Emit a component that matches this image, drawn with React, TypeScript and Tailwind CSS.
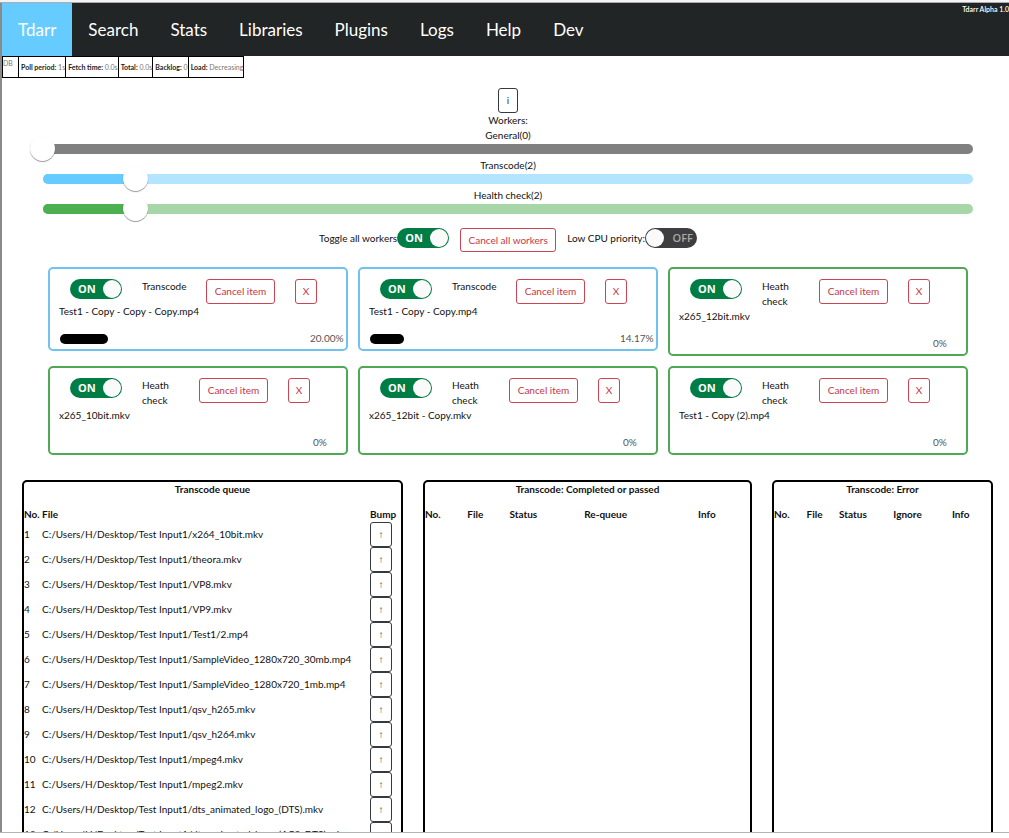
import React from "react";
import clsx from "clsx";

type WorkerKind = "transcode" | "health";

interface Worker {
  id: number;
  kind: WorkerKind;
  file: string;
  progress: number;
  percent: string;
}

const navItems = ["Tdarr", "Search", "Stats", "Libraries", "Plugins", "Logs", "Help", "Dev"];

const workers: Worker[] = [
  { id: 1, kind: "transcode", file: "Test1 - Copy - Copy - Copy.mp4", progress: 20, percent: "20.00%" },
  { id: 2, kind: "transcode", file: "Test1 - Copy - Copy.mp4", progress: 14.17, percent: "14.17%" },
  { id: 3, kind: "health", file: "x265_12bit.mkv", progress: 0, percent: "0%" },
  { id: 4, kind: "health", file: "x265_10bit.mkv", progress: 0, percent: "0%" },
  { id: 5, kind: "health", file: "x265_12bit - Copy.mkv", progress: 0, percent: "0%" },
  { id: 6, kind: "health", file: "Test1 - Copy (2).mp4", progress: 0, percent: "0%" }
];

const queue = [
  "x264_10bit.mkv",
  "theora.mkv",
  "VP8.mkv",
  "VP9.mkv",
  "Test1/2.mp4",
  "SampleVideo_1280x720_30mb.mp4",
  "SampleVideo_1280x720_1mb.mp4",
  "qsv_h265.mkv",
  "qsv_h264.mkv",
  "mpeg4.mkv",
  "mpeg2.mkv",
  "dts_animated_logo_(DTS).mkv",
  "dts_animated_logo_(AC3_DTS).mkv"
];

const Toggle: React.FC<{ label: string; defaultOn?: boolean }> = ({ label, defaultOn = false }) => (
  <span className="relative inline-block h-5 w-[52px] shrink-0">
    <input
      type="checkbox"
      role="switch"
      aria-label={label}
      defaultChecked={defaultOn}
      className="peer block h-5 w-[52px] cursor-pointer appearance-none rounded-full bg-[#3e3e40] checked:bg-[#007d44]"
    />
    <span className="pointer-events-none absolute left-px top-px size-[18px] rounded-full bg-[#fafafa] peer-checked:left-auto peer-checked:right-px" />
    <span
      className={clsx(
        "pointer-events-none absolute top-0 font-['Open_Sans',sans-serif] text-[11px] leading-5",
        defaultOn ? "left-2 font-bold text-white" : "right-1 font-semibold text-[#a8a8a8]"
      )}
    >
      {defaultOn ? "ON" : "OFF"}
    </span>
  </span>
);

const DangerButton: React.FC<{ children: React.ReactNode; className?: string }> = ({ children, className }) => (
  <button
    type="button"
    className={clsx("shrink-0 rounded-[3px] border border-[#cb4452] bg-white text-center text-[#c93545]", className)}
  >
    {children}
  </button>
);

interface WorkerSliderProps {
  id: string;
  label: string;
  value: number;
  railClass: string;
  fillClass: string;
}

const WorkerSlider: React.FC<WorkerSliderProps> = ({ id, label, value, railClass, fillClass }) => (
  <div>
    <label htmlFor={id} className="block text-center">
      {label}({value})
    </label>
    <div className="relative h-[15px] px-[13px] pt-px">
      <div className={clsx("h-[10px] overflow-hidden rounded-full", railClass)}>
        <div className={clsx("h-full", fillClass)} style={{ width: `${value * 5}%` }} />
      </div>
      <input
        id={id}
        type="range"
        min={0}
        max={20}
        defaultValue={value}
        className="absolute inset-x-0 top-0 h-[10px] w-full cursor-pointer appearance-none bg-transparent [&::-webkit-slider-thumb]:size-[25px] [&::-webkit-slider-thumb]:appearance-none [&::-webkit-slider-thumb]:rounded-full [&::-webkit-slider-thumb]:bg-white [&::-webkit-slider-thumb]:shadow-[0_1px_1px_rgba(0,0,0,0.4)]"
      />
    </div>
  </div>
);

const WorkerCard: React.FC<{ worker: Worker }> = ({ worker }) => {
  const isTranscode = worker.kind === "transcode";

  return (
    <article
      className={clsx(
        "rounded-[5px] border-2 pb-[3px] pl-[9px] pt-[10px]",
        isTranscode ? "border-[#6fc3ee]" : "border-[#4fa855]"
      )}
    >
      <div className="flex items-start gap-5 pl-[11px]">
        <Toggle label={`Worker ${worker.id}`} defaultOn />
        <p className={isTranscode ? "w-11" : "w-[37px]"}>{isTranscode ? "Transcode" : "Heath check"}</p>
        <DangerButton className="h-[25px] w-[69px]">Cancel item</DangerButton>
        <DangerButton className="h-[25px] w-[22px]">X</DangerButton>
      </div>
      <p>{worker.file}</p>
      <div className={clsx("mt-3 flex items-center pl-px", isTranscode ? "gap-[10px]" : "gap-[13px]")}>
        <div className="w-[240px]">
          <div className="h-[10px] rounded-full bg-black" style={{ width: `${worker.progress}%` }} />
        </div>
        <span className="text-[#555]">{worker.percent}</span>
      </div>
    </article>
  );
};

interface PanelProps {
  title: string;
  columns: { name: string; width?: string }[];
  children?: React.ReactNode;
}

const Panel: React.FC<PanelProps> = ({ title, columns, children }) => (
  <section className="rounded-[5px] border-2 border-black">
    <h2 className="text-center font-bold">{title}</h2>
    <table className="mt-[10px] w-full table-fixed border-collapse text-left">
      <thead>
        <tr>
          {columns.map((column) => (
            <th key={column.name} className={clsx("whitespace-nowrap p-0 font-bold", column.width)}>
              {column.name}
            </th>
          ))}
        </tr>
      </thead>
      <tbody>{children}</tbody>
    </table>
  </section>
);

const StatusCell: React.FC<{ name: string; value: string }> = ({ name, value }) => (
  <td className="whitespace-nowrap border border-black pl-0.5">
    <b className="font-bold text-[#222]">{name}:</b> {value}
  </td>
);

export default function App() {
  return (
    <div className="flex h-screen flex-col overflow-hidden bg-white font-['Lato','Open_Sans',sans-serif] text-[10px] leading-[15px] text-[#111]">
      <div className="h-[3px] shrink-0 border-b border-[#a9adb0] bg-[#f4f4f4]" />
      <div className="min-h-0 flex-1 overflow-hidden border-l-2 border-[#8a8a8a]">
        <header className="relative bg-[#212525] text-white">
          <nav className="flex">
            {navItems.map((item, index) => (
              <a
                key={item}
                href="#"
                className={clsx("px-4 text-[17px] leading-[53px]", index === 0 && "bg-[#66ccff]")}
              >
                {item}
              </a>
            ))}
          </nav>
          <span className="absolute right-0 top-0 text-[7px] font-semibold leading-3">Tdarr Alpha 1.0</span>
        </header>

        <table className="border-collapse text-[7px] leading-5 text-[#777]">
          <tbody>
            <tr>
              <td className="w-4 border border-black align-top leading-3">DB</td>
              <StatusCell name="Poll period" value="1s" />
              <StatusCell name="Fetch time" value="0.0s" />
              <StatusCell name="Total" value="0.0s" />
              <StatusCell name="Backlog" value="0" />
              <StatusCell name="Load" value="Decreasing" />
            </tr>
          </tbody>
        </table>

        <main>
          <section className="pl-7 pr-[23px] pt-[10px]">
            <div className="flex flex-col items-center">
              <button type="button" aria-label="Worker info" className="h-[25px] w-5 rounded-[3px] border border-[#343a40] text-[#343a40]">
                i
              </button>
              <p>Workers:</p>
            </div>
            <WorkerSlider id="general" label="General" value={0} railClass="bg-[#808080]" fillClass="bg-[#808080]" />
            <WorkerSlider id="transcode" label="Transcode" value={2} railClass="bg-[#b3e5ff]" fillClass="bg-[#66ccff]" />
            <WorkerSlider id="health" label="Health check" value={2} railClass="bg-[#a7d7a9]" fillClass="bg-[#4caf50]" />

            <div className="mt-[10px] flex items-start justify-center gap-[11px]">
              <div className="flex items-center">
                <span>Toggle all workers</span>
                <Toggle label="Toggle all workers" defaultOn />
              </div>
              <DangerButton className="h-6 w-24">Cancel all workers</DangerButton>
              <div className="flex items-center">
                <span>Low CPU priority:</span>
                <Toggle label="Low CPU priority" />
              </div>
            </div>

            <div className="mt-[15px] grid grid-cols-3 items-start gap-[10px] px-[18px]">
              {workers.map((worker) => (
                <WorkerCard key={worker.id} worker={worker} />
              ))}
            </div>
          </section>

          <div className="mt-[25px] grid min-h-[400px] grid-cols-[381fr_329fr_221fr] gap-5 pl-5 pr-4">
            <Panel
              title="Transcode queue"
              columns={[{ name: "No.", width: "w-[18px]" }, { name: "File" }, { name: "Bump", width: "w-[31px]" }]}
            >
              {queue.map((file, index) => (
                <tr key={file} className="h-[25px]">
                  <td className="p-0">{index + 1}</td>
                  <td className="whitespace-nowrap p-0">C:/Users/H/Desktop/Test Input1/{file}</td>
                  <td className="p-0">
                    <button
                      type="button"
                      aria-label={`Bump ${file}`}
                      className="block h-[25px] w-[22px] rounded-[3px] border border-[#343a40] font-['Open_Sans',sans-serif] text-[#343a40]"
                    >
                      ↑
                    </button>
                  </td>
                </tr>
              ))}
            </Panel>
            <Panel
              title="Transcode: Completed or passed"
              columns={[
                { name: "No.", width: "w-[13%]" },
                { name: "File", width: "w-[13%]" },
                { name: "Status", width: "w-[23%]" },
                { name: "Re-queue", width: "w-[35%]" },
                { name: "Info", width: "w-[16%]" }
              ]}
            />
            <Panel
              title="Transcode: Error"
              columns={[
                { name: "No.", width: "w-[15%]" },
                { name: "File", width: "w-[15%]" },
                { name: "Status", width: "w-[25%]" },
                { name: "Ignore", width: "w-[27%]" },
                { name: "Info", width: "w-[18%]" }
              ]}
            />
          </div>
        </main>
      </div>
      <div className="h-1.5 shrink-0 border-t border-[#b5b5b5] bg-white" />
    </div>
  );
}
